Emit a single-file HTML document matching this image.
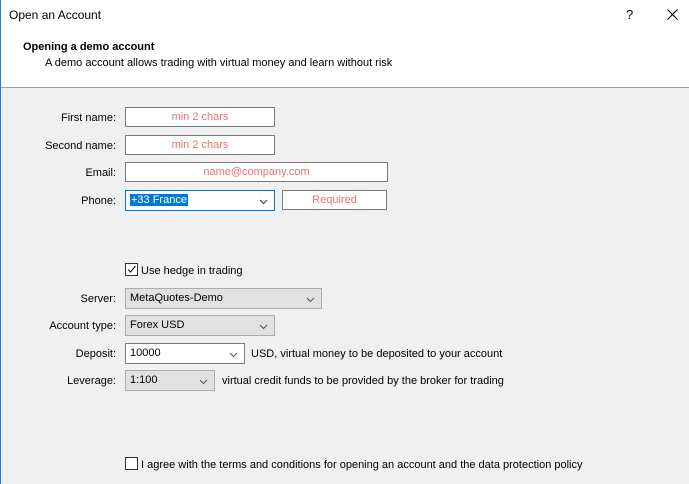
<!DOCTYPE html>
<html><head><style>
*{margin:0;padding:0;box-sizing:border-box}
body{width:689px;height:484px;position:relative;background:#f0f0f0;font-family:"Liberation Sans",sans-serif;font-size:11px;color:#000;overflow:hidden}
.a{position:absolute;white-space:nowrap}
.hdr{position:absolute;left:0;top:0;width:689px;height:88px;background:#fff;border-bottom:1px solid #a0a0a0}
.lb{position:absolute;width:116px;text-align:right;left:0}
.in{position:absolute;background:#fff;border:1px solid #7a7a7a;color:#f07070;text-align:center;line-height:19px}
.cb{position:absolute;background:#e1e1e1;border:1px solid #adadad;line-height:19px;padding-left:4px}
.cbw{background:#fff;border-color:#7a7a7a}
.chev{position:absolute;right:6px;top:7px;width:7px;height:7px}
.ck{position:absolute;width:13px;height:13px;border:1px solid #333;background:#fff}
</style></head><body>
<div style="position:absolute;left:0;top:0;width:1px;height:484px;background:#2b7bd4;z-index:5"></div>
<div class="hdr"></div>
<div class="a" style="left:9px;top:8px;font-size:12px">Open an Account</div>
<div class="a" style="left:626px;top:7px;font-size:13px">?</div>
<svg class="a" style="left:667px;top:9px" width="11" height="11"><path d="M0.5 0.5L10.5 10.5M10.5 0.5L0.5 10.5" stroke="#000" stroke-width="1.1"/></svg>
<div class="a" style="left:23px;top:41px;font-weight:bold">Opening a demo account</div>
<div class="a" style="left:45px;top:57px">A demo account allows trading with virtual money and learn without risk</div>

<div class="lb" style="top:112px">First name:</div>
<div class="in" style="left:125px;top:107px;width:150px;height:20px">min 2 chars</div>
<div class="lb" style="top:140px">Second name:</div>
<div class="in" style="left:125px;top:135px;width:150px;height:20px">min 2 chars</div>
<div class="lb" style="top:167px">Email:</div>
<div class="in" style="left:125px;top:162px;width:263px;height:20px">name@company.com</div>
<div class="lb" style="top:195px">Phone:</div>
<div class="cb cbw" style="left:125px;top:190px;width:150px;height:21px;border-color:#0078d7;padding-left:4px"><span style="background:#0078d7;color:#fff;padding:0 1px">+33 France</span><svg class="chev" viewBox="0 0 7 7" style="width:9px"><path d="M0 2L3.5 5.5L7 2" fill="none" stroke="#333"/></svg></div>
<div class="in" style="left:282px;top:190px;width:105px;height:20px">Required</div>

<div class="ck" style="left:125px;top:263px"><svg width="11" height="11" style="position:absolute;left:0;top:0"><path d="M2 5.5L4.5 8L9.5 2" fill="none" stroke="#222" stroke-width="1.2"/></svg></div>
<div class="a" style="left:141px;top:265px">Use hedge in trading</div>

<div class="lb" style="top:293px">Server:</div>
<div class="cb" style="left:125px;top:288px;width:197px;height:21px">MetaQuotes-Demo<svg class="chev" viewBox="0 0 7 7" style="width:9px"><path d="M0 2L3.5 5.5L7 2" fill="none" stroke="#555"/></svg></div>
<div class="lb" style="top:320px">Account type:</div>
<div class="cb" style="left:125px;top:315px;width:150px;height:21px">Forex USD<svg class="chev" viewBox="0 0 7 7" style="width:9px"><path d="M0 2L3.5 5.5L7 2" fill="none" stroke="#555"/></svg></div>
<div class="lb" style="top:348px">Deposit:</div>
<div class="cb cbw" style="left:125px;top:343px;width:120px;height:21px">10000<svg class="chev" viewBox="0 0 7 7" style="width:9px"><path d="M0 2L3.5 5.5L7 2" fill="none" stroke="#555"/></svg></div>
<div class="a" style="left:251px;top:348px">USD, virtual money to be deposited to your account</div>
<div class="lb" style="top:375px">Leverage:</div>
<div class="cb" style="left:125px;top:370px;width:90px;height:21px">1:100<svg class="chev" viewBox="0 0 7 7" style="width:9px"><path d="M0 2L3.5 5.5L7 2" fill="none" stroke="#555"/></svg></div>
<div class="a" style="left:222px;top:375px">virtual credit funds to be provided by the broker for trading</div>

<div class="ck" style="left:125px;top:457px"></div>
<div class="a" style="left:141px;top:459px">I agree with the terms and conditions for opening an account and the data protection policy</div>
</body></html>
